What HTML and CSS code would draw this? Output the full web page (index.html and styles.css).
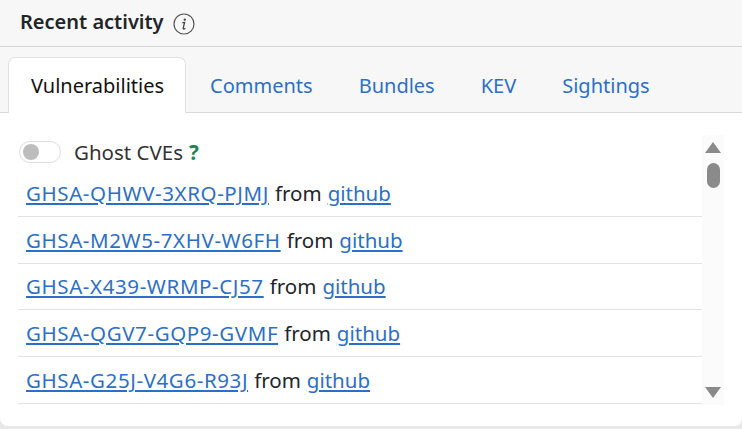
FILE: index.html
```html
<!doctype html>
<html lang="en">
  <head>
    <meta charset="UTF-8" />
    <title>Recent activity</title>
    <link rel="stylesheet" href="styles.css">
  </head>
  <body>
    <main class="card">
        <header class="card-header">
            <h2>Recent activity</h2>
            <svg class="info-icon" width="22" height="22" viewBox="0 0 22 22" aria-hidden="true">
                <circle cx="11" cy="11" r="10" fill="none" stroke="#555" stroke-width="1.2" />
                <circle cx="11.8" cy="6.6" r="1.2" fill="#444" />
                <path d="M9.3 9.6 L11.6 9.4 L10.2 15.2 Q10.1 16.2 11 16 L12.4 15.3" fill="none" stroke="#444" stroke-width="1.3" />
            </svg>
        </header>
        <nav class="tabs">
            <a class="tab active" href="#">Vulnerabilities</a>
            <a class="tab" href="#">Comments</a>
            <a class="tab" href="#">Bundles</a>
            <a class="tab" href="#">KEV</a>
            <a class="tab" href="#">Sightings</a>
        </nav>
        <section class="tab-body">
            <div class="list">
                <div class="ghost-row">
                    <span class="switch"><span class="knob"></span></span>
                    <label>Ghost CVEs</label>
                    <span class="help">?</span>
                </div>
                <ul>
                    <li><a class="ghsa" href="#">GHSA-QHWV-3XRQ-PJMJ</a> from <a href="#">github</a></li>
                    <li><a class="ghsa" href="#">GHSA-M2W5-7XHV-W6FH</a> from <a href="#">github</a></li>
                    <li><a class="ghsa" href="#">GHSA-X439-WRMP-CJ57</a> from <a href="#">github</a></li>
                    <li><a class="ghsa" href="#">GHSA-QGV7-GQP9-GVMF</a> from <a href="#">github</a></li>
                    <li><a class="ghsa" href="#">GHSA-G25J-V4G6-R93J</a> from <a href="#">github</a></li>
                </ul>
            </div>
            <div class="scrollbar">
                <span class="arrow-up"></span>
                <span class="thumb"></span>
                <span class="arrow-down"></span>
            </div>
        </section>
    </main>
  </body>
</html>
```

FILE: styles.css
```css
* {
    box-sizing: border-box;
    margin: 0;
    padding: 0;
}

body {
    font-family: "Noto Sans", "Open Sans", Arial, sans-serif;
    font-size: 20px;
    color: #212529;
    background-color: #e9e9e9;
    height: 429px;
    overflow: hidden;
}

a {
    color: #2b6fc9;
}

.card {
    height: 426px;
    background-color: #fff;
    border-radius: 0 0 8px 8px;
    overflow: hidden;
}

.card-header {
    display: flex;
    align-items: center;
    gap: 9px;
    height: 47px;
    padding: 0 20px 4px;
    background-color: #f7f7f7;
    border-bottom: 1px solid #d4d4d4;
}

.card-header h2 {
    font-size: 20px;
    font-weight: 600;
}

.info-icon {
    margin-top: 5px;
}

.tabs {
    display: flex;
    height: 66px;
    padding: 10px 8px 0;
    background-color: #f7f7f7;
    border-bottom: 1px solid #d8d8d8;
}

.tab {
    display: flex;
    align-items: center;
    height: 56px;
    padding: 0 22px;
    text-decoration: none;
    border-radius: 7px 7px 0 0;
    border: 1px solid transparent;
    border-bottom: none;
}

.tab.active {
    padding-right: 21px;
    margin-right: 1px;
    color: #111;
    background-color: #fff;
    border-color: #e2e2e2;
}

.tab-body {
    display: flex;
    padding: 22px 18px 0 18px;
}

.list {
    flex: 1;
}

.ghost-row {
    display: flex;
    align-items: center;
    height: 35px;
    padding: 0 1px 2px;
    font-size: 20.5px;
    color: #333;
}

.switch {
    display: flex;
    align-items: center;
    width: 42px;
    height: 22px;
    padding-left: 3px;
    margin-right: 13px;
    border: 1px solid #dedede;
    border-radius: 11px;
}

.knob {
    width: 16px;
    height: 16px;
    border-radius: 50%;
    background-color: #bdbdbd;
}

.help {
    margin-left: 6px;
    font-weight: 700;
    color: #1f8354;
}

ul {
    list-style: none;
}

li {
    display: flex;
    align-items: center;
    gap: 6px;
    height: 46.8px;
    padding: 0 0 0 8px;
    font-size: 20.5px;
    border-bottom: 1px solid #e3e3e3;
}

.ghsa {
    letter-spacing: 0.6px;
}

.scrollbar {
    display: flex;
    flex-direction: column;
    align-items: center;
    width: 22px;
    height: 270px;
    padding: 7px 0;
    background-color: #fbfbfb;
}

.arrow-up,
.arrow-down {
    width: 0;
    height: 0;
    border-left: 8px solid transparent;
    border-right: 8px solid transparent;
}

.arrow-up {
    border-bottom: 11px solid #8a8a8a;
}

.arrow-down {
    margin-top: auto;
    border-top: 11px solid #8a8a8a;
}

.thumb {
    width: 13px;
    height: 25px;
    margin-top: 10px;
    border-radius: 7px;
    background-color: #8a8a8a;
}
```
